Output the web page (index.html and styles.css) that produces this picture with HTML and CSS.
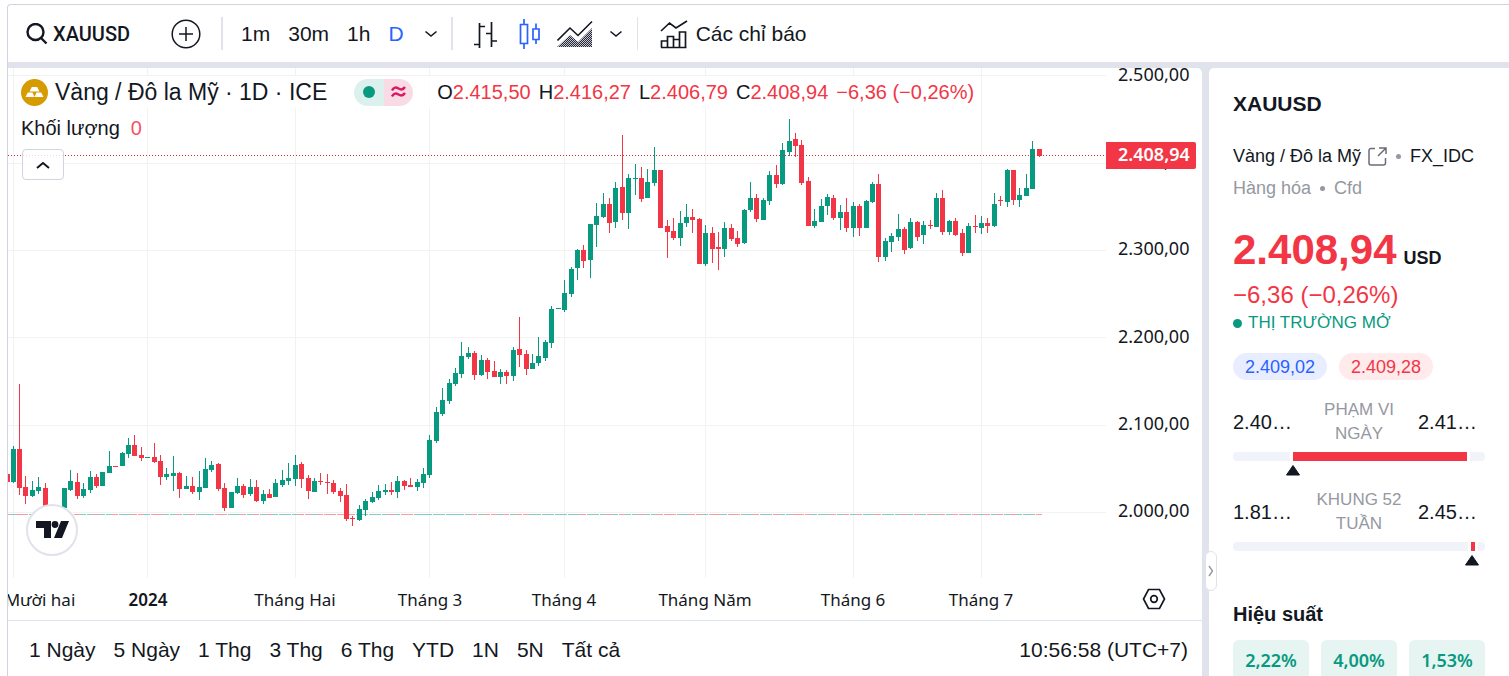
FILE: index.html
```html
<!DOCTYPE html>
<html lang="vi">
<head>
<meta charset="utf-8">
<title>XAUUSD</title>
<link rel="stylesheet" href="styles.css">
</head>
<body>
<div class="widget">
  <header class="toolbar">
    <button class="tool symbol" type="button">
      <svg width="22" height="22" viewBox="0 0 22 22" fill="none" stroke="#131722" stroke-width="2.4"><circle cx="9.5" cy="9" r="8"/><path d="M15 15l5.500 5.500"/></svg>
      <span>XAUUSD</span>
    </button>
    <button class="tool compare" type="button" aria-label="So sánh">
      <svg width="30" height="30" viewBox="0 0 30 30" fill="none" stroke="#131722" stroke-width="1.500"><circle cx="15" cy="15" r="13.800"/><path d="M8 15h14M15 8v14"/></svg>
    </button>
    <span class="divider"></span>
    <nav class="intervals">
      <button class="tool" type="button">1m</button>
      <button class="tool" type="button">30m</button>
      <button class="tool" type="button">1h</button>
      <button class="tool active" type="button">D</button>
      <button class="tool more" type="button" aria-label="Thêm khung thời gian"><svg width="14" height="8" viewBox="0 0 14 8" fill="none" stroke="#131722" stroke-width="1.600"><path d="M1.500 1.500l5.500 4.500 5.500-4.500"/></svg></button>
    </nav>
    <span class="divider"></span>
    <div class="styles">
      <button class="tool" type="button" aria-label="Thanh"><svg width="24" height="30" viewBox="0 0 24 30" fill="none" stroke="#131722" stroke-width="1.700"><path d="M6.500 4v25M1 25.500h5.500M6.500 7.500H12M18.500 3v25M13 14.500h5.500M18.500 22H24"/></svg></button>
      <button class="tool" type="button" aria-label="Nến"><svg width="22" height="30" viewBox="0 0 22 30" fill="none" stroke="#2962ff" stroke-width="1.700"><path d="M1.500 5.500h7v19h-7zM5 0v5.500M5 24.500V30M14 10h6v10.500h-6zM17 4.500V10M17 20.500v4.500"/></svg></button>
      <button class="tool" type="button" aria-label="Vùng"><svg width="36" height="28" viewBox="0 0 36 28"><defs><pattern id="dots" width="2" height="2" patternUnits="userSpaceOnUse"><rect width="2" height="2" fill="#c4c5ca"/><path d="M0 0h1v1H0zM1 1h1v1H1z" fill="#24283a"/></pattern></defs><path d="M0 27l13-12 8 7L35 8v19z" fill="url(#dots)"/><path d="M.5 20.500L13 8l8 7.500L35 1.500" fill="none" stroke="#131722" stroke-width="1.600"/></svg></button>
      <button class="tool more" type="button" aria-label="Thêm kiểu"><svg width="14" height="8" viewBox="0 0 14 8" fill="none" stroke="#131722" stroke-width="1.600"><path d="M1.500 1.500l5.500 4.500 5.500-4.500"/></svg></button>
    </div>
    <span class="divider thin"></span>
    <button class="tool indicators" type="button">
      <svg width="28" height="30" viewBox="0 0 28 30" fill="none" stroke="#131722" stroke-width="1.700"><path d="M1 12L9.500 4l6.500 5L27 2M1.500 28.500V22h6v6.500M7.500 22v-4.500h6v11M13.500 20.500h6v8M19.500 20.500V13h6v15.500M1 28.500h25.500"/></svg>
      <span>Các chỉ báo</span>
    </button>
  </header>

  <div class="content">
    <main class="chart">
      <div class="plot-row">
        <div class="plot">
          <svg id="candles" class="canvas" viewBox="8 68 1098 510" preserveAspectRatio="xMaxYMin meet" role="img" aria-label="Biểu đồ nến XAUUSD"></svg>
          <section class="legend">
            <div class="legend-row">
              <svg class="gold" width="27" height="27" viewBox="0 0 27 27"><circle cx="13.500" cy="13.500" r="13.500" fill="#d59b00"/><path d="M10.800 8h5.400l2.300 4.500h-10zM6.800 13.500h4.700l2 4.500H4.500zM15.500 13.500h4.700l2.300 4.500h-9z" fill="#fff"/></svg>
              <h1 class="pair">Vàng / Đô la Mỹ · 1D · ICE</h1>
              <span class="flags"><span class="open"><i></i></span><span class="approx"><svg width="15" height="12" viewBox="0 0 15 12" fill="none" stroke="#d81b60" stroke-width="2.400"><path d="M1 4.500C3 .8 5 1 7.500 2.500S12 4 14 1M1 10.500C3 6.800 5 7 7.500 8.500S12 10 14 7"/></svg></span></span>
              <p class="ohlc"><span>O<b>2.415,50</b></span><span>H<b>2.416,27</b></span><span>L<b>2.406,79</b></span><span>C<b>2.408,94</b></span><span><b>−6,36 (−0,26%)</b></span></p>
            </div>
            <div class="legend-row volume"><span>Khối lượng</span><b>0</b></div>
            <button class="collapse" type="button" aria-label="Thu gọn"><svg width="14" height="8" viewBox="0 0 14 8" fill="none" stroke="#131722" stroke-width="2"><path d="M1 7l6-5 6 5"/></svg></button>
          </section>
          <a class="logo" href="#" aria-label="TradingView"><svg width="34" height="18" viewBox="0 0 34 18" fill="#131722"><path d="M0 0h15v17H8V7H0zM25 0h8l-7 17h-8z"/><circle cx="19" cy="3.500" r="3.400"/></svg></a>
        </div>
        <svg class="price-axis" width="96" viewBox="0 68 96 510" preserveAspectRatio="xMinYMin meet">
          <text x="12" y="81">2.500,00</text>
          <text x="12" y="168">2.400,00</text>
          <text x="12" y="255">2.300,00</text>
          <text x="12" y="343">2.200,00</text>
          <text x="12" y="430">2.100,00</text>
          <text x="12" y="517">2.000,00</text>
          <path d="M0 142h88a2 2 0 0 1 2 2v23a2 2 0 0 1-2 2H0z" fill="#f23645"/>
          <text class="last" x="12" y="161">2.408,94</text>
        </svg>
      </div>
      <div class="time-row">
        <svg class="time-axis" viewBox="8 578 1098 42" preserveAspectRatio="xMaxYMin meet">
          <text x="40" y="606">Mười hai</text>
          <text class="year" x="148" y="606">2024</text>
          <text x="295" y="606">Tháng Hai</text>
          <text x="430" y="606">Tháng 3</text>
          <text x="564" y="606">Tháng 4</text>
          <text x="705" y="606">Tháng Năm</text>
          <text x="853" y="606">Tháng 6</text>
          <text x="981" y="606">Tháng 7</text>
        </svg>
        <button class="settings" type="button" aria-label="Cài đặt"><svg width="24" height="22" viewBox="0 0 24 22" fill="none" stroke="#131722" stroke-width="1.700"><path d="M6.500 1.500h11L22.500 11l-5 9.500h-11L1.500 11z"/><circle cx="12" cy="11" r="3.300"/></svg></button>
      </div>
      <footer class="ranges">
        <button type="button">1 Ngày</button><button type="button">5 Ngày</button><button type="button">1 Thg</button><button type="button">3 Thg</button><button type="button">6 Thg</button><button type="button">YTD</button><button type="button">1N</button><button type="button">5N</button><button type="button">Tất cả</button>
        <button class="clock" type="button">10:56:58 (UTC+7)</button>
      </footer>
    </main>

    <div class="splitter"><button type="button" aria-label="Ẩn bảng"><svg width="6" height="12" viewBox="0 0 6 12" fill="none" stroke="#9598a1" stroke-width="1.400"><path d="M1 1l3.500 5L1 11"/></svg></button></div>

    <aside class="details">
      <h2 class="ticker">XAUUSD</h2>
      <p class="desc"><a href="#">Vàng / Đô la Mỹ <svg width="19" height="19" viewBox="0 0 19 19" fill="none" stroke="#6a6d78" stroke-width="1.500"><path d="M7 1.500H3A2 2 0 0 0 1 3.500V16a2 2 0 0 0 2 2h12.500a2 2 0 0 0 2-2v-5M11 1h7v6M17.500 1.500L10 9"/></svg></a><i></i><span>FX_IDC</span></p>
      <p class="kind"><span>Hàng hóa</span><i></i><span>Cfd</span></p>
      <p class="price"><b>2.408,94</b><span>USD</span></p>
      <p class="change">−6,36 (−0,26%)</p>
      <p class="status"><i></i>THỊ TRƯỜNG MỞ</p>
      <div class="quotes"><button class="bid" type="button">2.409,02</button><button class="ask" type="button">2.409,28</button></div>
      <section class="range">
        <div class="range-text"><span>2.40…</span><em>PHẠM VI NGÀY</em><span>2.41…</span></div>
        <div class="bar day"><i></i><b></b><i></i></div>
        <svg class="mark day-mark" width="16" height="12" viewBox="0 0 16 12"><path d="M8 1.500L14.500 11h-13z" fill="#131722" stroke="#131722" stroke-linejoin="round"/></svg>
      </section>
      <section class="range">
        <div class="range-text"><span>1.81…</span><em>KHUNG 52 TUẦN</em><span>2.45…</span></div>
        <div class="bar year"><i></i><b></b><i></i></div>
        <svg class="mark year-mark" width="16" height="12" viewBox="0 0 16 12"><path d="M8 1.500L14.500 11h-13z" fill="#131722" stroke="#131722" stroke-linejoin="round"/></svg>
      </section>
      <h3>Hiệu suất</h3>
      <div class="tiles"><span>2,22%</span><span>4,00%</span><span>1,53%</span></div>
    </aside>
  </div>
</div>
<script src="chart.js"></script>
</body>
</html>
```

FILE: styles.css
```css
* { box-sizing: border-box; }
body {
  margin: 0;
  height: 100vh;
  overflow: hidden;
  padding: 4px 0 0 7px;
  background: #fff;
  color: #131722;
  font-family: "Liberation Sans", Arial, sans-serif;
  font-size: 20px;
}
h1, h2, h3, p { margin: 0; font-weight: normal; }
button { border: 0; padding: 0; background: none; color: inherit; font: inherit; white-space: nowrap; }
a { color: inherit; text-decoration: none; }
svg { display: block; flex: none; }
b { font-weight: normal; }

.widget {
  display: flex;
  flex-direction: column;
  height: 100%;
  border: solid #d1d4dc;
  border-width: 1px 0 0 1px;
  border-radius: 4px 0 0 0;
}

.toolbar { display: flex; align-items: center; height: 57px; flex: none; padding-left: 18px; font-size: 21px; }
.tool { display: flex; align-items: center; }
.symbol { gap: 5px; font-family: Roboto, sans-serif; font-weight: 500; font-size: 20px; }
.compare { margin: 0 20px 0 41px; }
.divider { width: 2px; height: 33px; background: #e0e3eb; }
.divider.thin { width: 1px; }
.intervals { display: flex; gap: 18px; margin: 0 13px 0 18px; }
.intervals .more { margin-left: 2px; }
.active { color: #2962ff; }
.styles { display: flex; align-items: center; gap: 16px; margin: 0 14px 0 20px; }
.styles .tool:first-child { margin-right: 6px; }
.indicators { gap: 8px; margin-left: 22px; }

.content { display: flex; flex: 1; min-height: 0; border-top: 6px solid #e0e3eb; background: #e0e3eb; }
.chart { display: flex; flex: 1; min-width: 0; flex-direction: column; background: #fff; border-radius: 0 5px 0 0; overflow: hidden; }
.plot-row { display: flex; flex: 1; min-height: 0; }
.plot { position: relative; flex: 1; min-width: 0; }
.canvas { width: 100%; height: 100%; }
.price-axis { height: 100%; }
.price-axis text, .time-axis text { font: 18px "Noto Sans", sans-serif; fill: #131722; }
.price-axis .last { fill: #fff; font-weight: 600; }
.time-row { display: flex; height: 42px; }
.time-axis { flex: 1; min-width: 0; height: 42px; }
.time-axis text { font-size: 17px; text-anchor: middle; }
.time-axis .year { font-weight: 600; }
.settings { display: grid; place-items: center; width: 96px; }

.legend { position: absolute; top: 8px; left: 13px; }
.legend-row { display: flex; align-items: center; height: 32px; background: rgba(255, 255, 255, .8); }
.pair { margin-left: 7px; font-size: 23px; white-space: nowrap; }
.flags { display: flex; width: 59px; height: 27px; margin: 0 24px 0 27px; border-radius: 14px; overflow: hidden; }
.flags span { display: grid; flex: 1; place-items: center; }
.flags .open { background: #dcf1ee; }
.flags .approx { background: #f9dbe6; }
.flags i { width: 12px; height: 12px; border-radius: 50%; background: #089981; }
.ohlc { display: flex; gap: 8px; white-space: nowrap; }
.ohlc b { color: #f23645; }
.volume { width: max-content; height: 40px; gap: 11px; }
.volume b { color: #f7525f; }
.collapse { display: grid; place-items: center; width: 42px; height: 31px; margin: 1px; border: 1px solid #d1d4dc; border-radius: 4px; background: rgba(255, 255, 255, .8); }
.logo { position: absolute; bottom: 22px; left: 18px; display: grid; place-items: center; width: 52px; height: 52px; padding-left: 2px; border: 2px solid #e0e3eb; border-radius: 50%; background: #fff; }

.ranges { display: flex; align-items: center; height: 56px; padding: 2px 14px 0 21px; gap: 18px; border-top: 1px solid #e0e3eb; font-size: 21px; }
.clock { margin-left: auto; }

.splitter { position: relative; width: 7px; flex: none; }
.splitter button { position: absolute; top: 483px; left: 3px; display: grid; place-items: center; width: 12px; height: 40px; border: 1px solid #e0e3eb; border-radius: 6px; background: #fff; }

.details { display: flex; flex-direction: column; width: 300px; flex: none; padding: 24px 24px 0; background: #fff; border-radius: 5px 0 0 0; overflow: hidden; font-size: 18px; line-height: 24px; }
.details > * { flex: none; }
.ticker { font-size: 21px; font-weight: bold; }
.desc, .kind { display: flex; align-items: center; height: 32px; white-space: nowrap; }
.desc { margin-top: 24px; }
.desc a { display: flex; align-items: center; gap: 7px; }
.desc i, .kind i { width: 5px; height: 5px; margin: 0 9px; border-radius: 50%; background: #9598a1; }
.kind { color: #9598a1; }
.price { display: flex; align-items: baseline; gap: 7px; margin-top: 26px; line-height: 40px; }
.price b { color: #f23645; font-size: 42px; font-weight: bold; }
.price span { font-weight: bold; }
.change { margin-top: 1px; color: #f23645; font-size: 24px; line-height: 32px; }
.status { display: flex; align-items: center; gap: 6px; color: #089981; font-size: 17px; white-space: nowrap; }
.status i { width: 9px; height: 9px; border-radius: 50%; background: #089981; }
.quotes { display: flex; gap: 12px; margin: 18px 0; }
.quotes button { width: 94px; height: 27px; border-radius: 14px; }
.bid { background: #e8eeff; color: #2962ff; }
.ask { background: #ffeaec; color: #f23645; }
.range { margin-bottom: 12px; }
.range-text { display: grid; grid-template-columns: 67px 1fr 67px; align-items: center; font-size: 20px; }
.range-text em { padding: 0 12px; color: #9598a1; font-size: 17px; font-style: normal; text-align: center; }
.bar { display: grid; gap: 3px; height: 9px; margin: 6px 0 3px; }
.bar i { background: #f0f3fa; }
.bar b { background: #f23645; }
.bar i:first-child { border-radius: 4px 0 0 4px; }
.bar i:last-child { border-radius: 0 4px 4px 0; }
.day { grid-template-columns: 57fr 174fr 15fr; }
.year { grid-template-columns: 235fr 4fr 7fr; }
.mark { margin-left: 52px; }
.year-mark { margin-left: 231px; }
.details h3 { margin-top: 24px; font-size: 20px; font-weight: bold; }
.tiles { display: grid; grid-template-columns: repeat(3, 1fr); gap: 12px; margin-top: 14px; }
.tiles span { padding: 8px 0 32px; border-radius: 6px; background: #e6f5f2; color: #089981; font-family: "Noto Sans", sans-serif; font-weight: 600; text-align: center; }
```

FILE: chart.js
```js
// Each candle: direction, wick x, high, body top, body bottom, low.
const candles = `
r 7 474 474 482 482|g 13 446 449 482 483|r 19 384 449 488 495|r 25 476 487 496 504|g 32 481 490 496 497|g 38 477 487 491 494|r 45 483 488 507 507|r 51 505 507 515 518|g 58 505 507 515 516|g 64 488 488 508 508
g 70 470 481 490 491|r 77 473 482 496 499|g 83 483 489 496 498|g 90 471 477 490 493|r 96 474 477 486 488|g 102 472 472 486 486|g 109 451 466 473 473|r 115 466 466 467 467|g 122 452 453 466 466|g 128 438 445 454 458
r 134 435 445 456 456|r 141 447 455 458 461|g 147 457 457 458 458|r 154 443 457 462 463|r 160 455 461 477 485|g 166 468 474 477 480|g 173 456 473 476 491|r 179 472 473 489 498|g 186 476 486 489 489|r 192 477 486 492 494
g 199 471 487 492 500|g 205 458 469 488 488|g 211 461 465 470 472|r 218 463 464 489 491|r 224 483 488 508 511|g 231 492 492 508 508|g 237 478 486 493 494|r 243 484 486 495 498|g 250 479 487 494 496|r 256 480 487 501 502
g 263 490 494 501 504|r 269 489 494 498 498|g 275 479 483 497 497|g 282 470 480 485 487|g 288 463 478 481 485|g 295 455 465 479 486|r 301 462 464 479 488|r 308 475 478 491 499|g 314 478 481 492 492|r 320 473 481 482 485
r 327 474 482 483 494|r 333 480 483 492 494|r 340 488 491 496 502|r 346 484 495 519 521|r 352 516 518 519 526|g 359 505 509 520 521|g 365 499 501 510 516|g 372 492 497 502 503|g 378 485 491 498 500|g 385 484 490 492 495
r 391 482 490 492 495|g 397 476 481 492 498|r 404 480 481 486 490|r 410 478 485 487 487|g 417 479 482 487 491|g 423 468 474 483 488|g 429 435 440 475 478|g 436 407 412 441 443|g 442 388 400 414 416|g 449 379 383 401 404
g 455 368 373 384 386|g 461 342 356 374 378|g 468 347 353 357 359|r 474 351 353 375 380|g 481 355 360 375 376|r 487 358 360 372 379|r 494 361 371 377 377|g 500 369 372 377 384|r 506 370 372 376 384|g 513 347 350 376 381
r 519 317 349 355 367|r 526 350 354 369 375|g 532 354 363 369 369|g 538 337 356 363 366|g 545 340 342 358 361|g 551 306 309 343 348|g 558 308 308 309 309|g 564 280 293 310 312|g 571 267 269 294 297|g 577 249 250 268 280
r 583 245 250 261 268|g 590 224 224 260 278|g 596 203 216 225 247|g 603 193 204 217 218|r 609 198 204 223 233|g 615 182 188 222 228|r 622 135 187 213 220|g 628 174 178 213 229|g 635 164 178 179 195|r 641 167 178 199 202
g 647 169 182 198 198|g 654 147 170 183 186|r 660 170 170 228 228|r 667 220 226 232 258|r 673 218 231 238 240|g 680 211 223 238 246|g 686 204 217 223 227|r 692 209 217 220 233|r 699 218 219 264 264|g 705 225 233 264 266
r 712 227 233 249 263|r 718 232 247 249 270|g 724 222 228 249 257|r 731 224 228 239 241|r 737 231 238 244 247|g 744 209 210 243 244|g 750 182 198 210 212|r 756 194 198 219 222|g 763 198 200 220 220|g 769 171 175 201 205
r 776 165 175 184 188|g 782 143 150 184 185|g 789 119 141 152 156|r 795 133 139 146 157|r 801 140 145 183 185|r 808 177 181 226 226|g 814 209 221 226 228|g 821 199 206 222 222|g 827 194 197 206 215|r 833 195 198 218 220
g 840 205 212 218 230|r 846 198 212 228 232|g 853 202 206 228 237|r 859 204 206 228 236|g 866 200 201 228 228|g 872 182 184 202 203|r 878 174 184 257 262|g 885 238 241 257 261|g 891 233 236 242 252|g 898 214 229 237 241
r 904 227 229 250 254|g 910 218 222 248 249|r 917 221 222 237 241|g 923 221 225 235 244|r 930 220 225 226 229|g 936 193 198 227 227|r 942 190 198 232 235|g 949 220 221 232 235|r 955 218 221 235 236|r 962 229 233 253 256
g 968 223 226 253 253|r 975 215 226 227 233|g 981 216 223 228 234|r 987 218 223 226 233|g 994 193 204 226 227|r 1000 196 200 201 206|g 1007 169 170 202 207|r 1013 170 170 200 205|g 1019 188 195 200 207|g 1026 174 188 196 196
g 1032 141 149 189 189|r 1039 149 149 156 157`
  .trim().split(/[|\n]/).map(row => row.split(" "));

const svg = document.getElementById("candles");
const colors = { g: "#089981", r: "#f23645" };

function rect(x, y, width, height, fill, opacity = 1) {
  const node = document.createElementNS("http://www.w3.org/2000/svg", "rect");
  Object.entries({ x, y, width, height, fill, opacity, "shape-rendering": "crispEdges" })
    .forEach(([name, value]) => node.setAttribute(name, value));
  svg.append(node);
}

[13, 147, 295, 429, 564, 705, 853, 981].forEach(x => rect(x, 68, 1, 510, "#f2f2f3"));
[75, 163, 250, 337, 425, 512].forEach(y => rect(8, y, 1098, 1, "#f2f2f3"));

for (const [dir, ...values] of candles) {
  const [x, high, top, bottom, low] = values.map(Number);
  rect(x - 3, 514, 6, 1, colors[dir], 0.5);
  rect(x, high, 1, low - high, colors[dir]);
  rect(x - 2, top, 5, bottom - top, colors[dir]);
}

for (let x = 8; x < 1105; x += 3) rect(x, 155, 1, 1, "#c8323f");
```
